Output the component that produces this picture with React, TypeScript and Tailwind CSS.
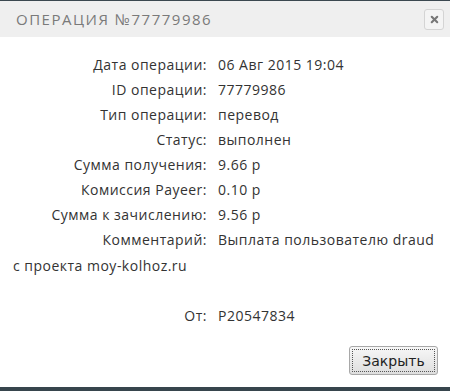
import { X } from "lucide-react";

const rows = [
    { label: "Дата операции:", value: "06 Авг 2015 19:04" },
    { label: "ID операции:", value: "77779986" },
    { label: "Тип операции:", value: "перевод" },
    { label: "Статус:", value: "выполнен" },
    { label: "Сумма получения:", value: "9.66 р" },
    { label: "Комиссия Payeer:", value: "0.10 р" },
    { label: "Сумма к зачислению:", value: "9.56 р" },
    { label: "Комментарий:", value: "Выплата пользователю draud" },
];

export default function App() {
    return (
        <div className="w-[450px] h-[391px] bg-white flex flex-col overflow-hidden font-['Open_Sans',sans-serif] text-[#333]">
            <div className="h-px bg-[#3b4850]" />

            {/* Header */}
            <div className="h-[36px] bg-[#efefef] flex items-center justify-between pl-[16px] pr-[6px]">
                <h1 className="text-[15px] tracking-[0.1em] text-[#7a7a7a] uppercase">Операция №77779986</h1>
                <button className="w-[20px] h-[21px] rounded-[3px] border border-[#d4d4d4] bg-[#f4f4f4] flex items-center justify-center">
                    <X size={11} strokeWidth={4.5} className="text-[#777]" />
                </button>
            </div>

            {/* Details */}
            <div className="flex-1 pl-[13px] pr-[14px] pt-[15px] text-[14px] tracking-[0.035em] leading-[25px]">
                {rows.map((r) => (
                    <div key={r.label} className="flex whitespace-nowrap">
                        <span className="w-[194px] text-right shrink-0">{r.label}</span>
                        <span className="pl-[11px]">{r.value}</span>
                    </div>
                ))}
                <p className="leading-[28px]">с проекта moy-kolhoz.ru</p>
                <div className="flex mt-[23px]">
                    <span className="w-[194px] text-right shrink-0">От:</span>
                    <span className="pl-[11px]">P20547834</span>
                </div>
            </div>

            {/* Footer */}
            <div className="flex justify-end pr-[12px] pb-[12px]">
                <button className="w-[89px] h-[29px] rounded-[3px] border border-[#a8a8a8] bg-gradient-to-b from-[#f7f7f7] to-[#dedede] p-[2px] font-['DejaVu_Sans',sans-serif] text-[14px] text-[#222]">
                    <span className="block h-full border border-dotted border-[#555] leading-[22px]">Закрыть</span>
                </button>
            </div>
            <div className="h-[4px] bg-[#37454d]" />
        </div>
    );
}
